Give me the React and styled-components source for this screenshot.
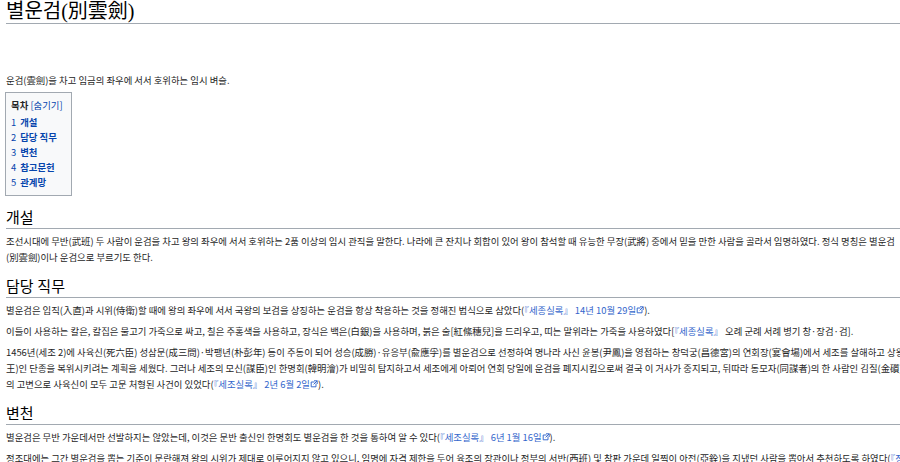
import React from "react";
import styled, { createGlobalStyle } from "styled-components";

const Global = createGlobalStyle`
  body { margin: 0; background: #fff; overflow: hidden; }
`;
const Page = styled.div`
  width: 900px; height: 462px; overflow: hidden; padding: 0 0 0 6px; box-sizing: border-box;
  font-family: "Noto Sans CJK KR", "Noto Sans", sans-serif; font-size: 9.4px; color: #252525;
`;
const Title = styled.h1`
  margin: 0; font-family: "Liberation Serif", "Noto Sans CJK KR", serif; font-weight: normal;
  font-size: 20px; line-height: 23px; border-bottom: 1px solid #a2a9b1; color: #000;
`;
const Intro = styled.p` margin: 48px 0 0; line-height: 16px; `;
const Toc = styled.div`
  display: inline-flex; flex-direction: column; margin-top: 4px; margin-left: -1px;
  border: 1px solid #a2a9b1; background: #f8f9fa; padding: 5px 8px 5px 5px;
`;
const TocHead = styled.div` font-weight: bold; line-height: 15px; margin-bottom: 2px; white-space: nowrap;
  span { font-weight: normal; color: #0645ad; }`;
const TocItem = styled.div` line-height: 15px; color: #0645ad; font-weight: bold; white-space: nowrap;
  b { font-weight: normal; margin-right: 4px; }`;
const H2 = styled.h2`
  margin: ${p => p.$top}px 0 0; font-family: "Liberation Serif", "Noto Sans CJK KR", serif;
  font-weight: normal; font-size: 15px; line-height: 20px; border-bottom: 1px solid #a2a9b1; color: #000;
`;
const P = styled.p`
  margin: ${p => p.$top ?? 5}px 0 0; line-height: 16px; white-space: nowrap;
`;
const A = styled.span` color: #3366cc; `;
const Ext = () => (
  <svg width="8" height="8" viewBox="0 0 10 10" style={{ verticalAlign: "0px" }}>
    <path d="M1.5 2.5h4M1.5 2.5v6h6v-4" fill="none" stroke="#36c" strokeWidth="1.2" />
    <path d="M5 1h4v4M9 1L4.5 5.5" fill="none" stroke="#36c" strokeWidth="1.2" />
  </svg>
);

export default function App() {
  return (
    <Page>
      <Global />
      <Title>별운검(別雲劍)</Title>
      <Intro>운검(雲劍)을 차고 임금의 좌우에 서서 호위하는 임시 벼슬.</Intro>
      <Toc>
        <TocHead>목차 <span>[숨기기]</span></TocHead>
        {["개설", "담당 직무", "변천", "참고문헌", "관계망"].map((t, i) => (
          <TocItem key={t}><b>{i + 1}</b>{t}</TocItem>
        ))}
      </Toc>
      <H2 $top={12}>개설</H2>
      <P $top={4}>조선시대에 무반(武班) 두 사람이 운검을 차고 왕의 좌우에 서서 호위하는 2품 이상의 임시 관직을 말한다. 나라에 큰 잔치나 회합이 있어 왕이 참석할 때 유능한 무장(武將) 중에서 믿을 만한 사람을 골라서 임명하였다. 정식 명칭은 별운검<br />(別雲劍)이나 운검으로 부르기도 한다.</P>
      <H2 $top={12}>담당 직무</H2>
      <P $top={4}>별운검은 입직(入直)과 시위(侍衛)할 때에 왕의 좌우에 서서 국왕의 보검을 상징하는 운검을 항상 착용하는 것을 정해진 법식으로 삼았다(<A>『세종실록』 14년 10월 29일<Ext /></A>).</P>
      <P>이들이 사용하는 칼은, 칼집은 물고기 가죽으로 싸고, 칠은 주홍색을 사용하고, 장식은 백은(白銀)을 사용하며, 붉은 술[紅絛穗兒]을 드리우고, 띠는 말위라는 가죽을 사용하였다[<A>『세종실록』</A> 오례 군례 서례 병기 창·장검·검].</P>
      <P>1456년(세조 2)에 사육신(死六臣) 성삼문(成三問)·박팽년(朴彭年) 등이 주동이 되어 성승(成勝)·유응부(兪應孚)를 별운검으로 선정하여 명나라 사신 윤봉(尹鳳)을 영접하는 창덕궁(昌德宮)의 연회장(宴會場)에서 세조를 살해하고 상왕(上<br />王)인 단종을 복위시키려는 계획을 세웠다. 그러나 세조의 모신(謀臣)인 한명회(韓明澮)가 비밀히 탐지하고서 세조에게 아뢰어 연회 당일에 운검을 폐지시킴으로써 결국 이 거사가 중지되고, 뒤따라 동모자(同謀者)의 한 사람인 김질(金礩)<br />의 고변으로 사육신이 모두 고문 처형된 사건이 있었다(<A>『세조실록』 2년 6월 2일<Ext /></A>).</P>
      <H2 $top={12}>변천</H2>
      <P $top={4}>별운검은 무반 가운데서만 선발하지는 않았는데, 이것은 문반 출신인 한명회도 별운검을 한 것을 통하여 알 수 있다(<A>『세조실록』 6년 1월 16일<Ext /></A>).</P>
      <P>정조대에는 그간 별운검을 뽑는 기준이 문란해져 왕의 시위가 제대로 이루어지지 않고 있으니, 임명에 자격 제한을 두어 육조의 장관이나 정부의 서반(西班) 및 참판 가운데 일찍이 아전(亞銓)을 지냈던 사람을 뽑아서 추천하도록 하였다(<A>『정조실록』</A></P>
    </Page>
  );
}
